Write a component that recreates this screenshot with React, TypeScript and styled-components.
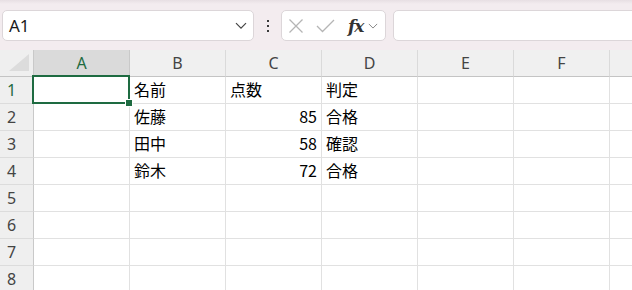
import React from 'react';
import styled, { createGlobalStyle } from 'styled-components';

const GlobalStyle = createGlobalStyle`
  body {
    margin: 0;
    background: #ffffff;
    font-family: "Noto Sans", "Noto Sans CJK JP", sans-serif;
  }
`;

// G is only partly in view, its letter falls outside the window
const columns = ['A', 'B', 'C', 'D', 'E', 'F', ''];

interface RowData {
  name?: string;
  score?: number | string;
  result?: string;
}

const rows: RowData[] = [
  { name: '名前', score: '点数', result: '判定' },
  { name: '佐藤', score: 85, result: '合格' },
  { name: '田中', score: 58, result: '確認' },
  { name: '鈴木', score: 72, result: '合格' },
  {},
  {},
  {},
  {},
];

const Page = styled.div`
  width: 632px;
  height: 290px;
  overflow: hidden;
  background: #ffffff;
`;

const Toolbar = styled.div`
  height: 50px;
  box-sizing: border-box;
  display: flex;
  align-items: flex-start;
  padding: 10px 0 0 2px;
  background: linear-gradient(180deg, #e7dfe3 0px, #f3ecef 4px, #f3ecef 100%);
  overflow: hidden;
`;

const NameBox = styled.div`
  flex: none;
  width: 252px;
  height: 31px;
  box-sizing: border-box;
  display: flex;
  align-items: center;
  justify-content: space-between;
  padding: 0 6px 0 6px;
  background: #ffffff;
  border: 1px solid #dcd6d9;
  border-radius: 5px;
  font-family: "Noto Sans", sans-serif;
  font-size: 17px;
  color: #1a1a1a;
`;

const Kebab = styled.div`
  flex: none;
  width: 27px;
  height: 31px;
  display: flex;
  flex-direction: column;
  align-items: center;
  justify-content: center;
  gap: 3px;
`;

const Dot = styled.span`
  width: 2px;
  height: 2px;
  background: #3a3a3a;
`;

const FxGroup = styled.div`
  flex: none;
  width: 105px;
  height: 31px;
  box-sizing: border-box;
  display: flex;
  align-items: center;
  padding-left: 6px;
  background: #ffffff;
  border: 1px solid #dcd6d9;
  border-radius: 5px;
`;

const FxLabel = styled.span`
  margin-left: 13px;
  font-family: "DejaVu Serif", "Liberation Serif", serif;
  font-style: italic;
  font-weight: bold;
  font-size: 17px;
  color: #333333;
  letter-spacing: -1px;
`;

const FormulaBar = styled.div`
  flex: none;
  width: 300px;
  height: 31px;
  margin-left: 7px;
  box-sizing: border-box;
  background: #ffffff;
  border: 1px solid #dcd6d9;
  border-radius: 5px;
`;

const Sheet = styled.div`
  display: grid;
  grid-template-columns: 34px repeat(7, 96px);
  grid-auto-rows: 27px;
`;

const Corner = styled.div`
  box-sizing: border-box;
  background: #efefef;
  border-right: 1px solid #c9c9c9;
  border-bottom: 1px solid #c4c4c4;
  display: flex;
  align-items: flex-end;
  justify-content: flex-end;
  padding: 0 4px 5px 0;
`;

const ColHeader = styled.div<{ $active?: boolean }>`
  box-sizing: border-box;
  display: flex;
  align-items: center;
  justify-content: center;
  background: ${p => (p.$active ? '#dadada' : '#f0f0f0')};
  border-right: 1px solid ${p => (p.$active ? '#c9c9c9' : '#dadada')};
  border-bottom: 1px solid #c4c4c4;
  color: ${p => (p.$active ? '#1e6b41' : '#444444')};
  font-size: 16px;
  padding-bottom: 1px;
`;

const RowHeader = styled.div<{ $active?: boolean }>`
  box-sizing: border-box;
  display: flex;
  align-items: center;
  padding-left: 7px;
  background: #efefef;
  border-right: 1px solid #c9c9c9;
  border-bottom: 1px solid #dcdcdc;
  color: ${p => (p.$active ? '#1e6b41' : '#444444')};
  font-size: 16px;
  padding-bottom: 1px;
`;

const Cell = styled.div<{ $align?: 'left' | 'right' }>`
  position: relative;
  box-sizing: border-box;
  display: flex;
  align-items: center;
  justify-content: ${p => (p.$align === 'right' ? 'flex-end' : 'flex-start')};
  padding: 0 4px 2px 4px;
  border-right: 1px solid #e1e1e1;
  border-bottom: 1px solid #e1e1e1;
  font-family: "Noto Sans CJK JP", "Noto Sans", sans-serif;
  font-size: 16px;
  color: #000000;
  white-space: nowrap;
`;

const Selection = styled.div`
  position: absolute;
  left: -2px;
  top: -2px;
  right: -1px;
  bottom: -1px;
  border: 2px solid #1e6b41;
  pointer-events: none;
  z-index: 1;
`;

const FillHandle = styled.div`
  position: absolute;
  right: -5px;
  bottom: -5px;
  width: 6px;
  height: 6px;
  background: #1e6b41;
  border: 1px solid #ffffff;
`;

const Chevron = ({ size = 12, color = '#333' }: { size?: number; color?: string }) => (
  <svg width={size} height={size * 0.6} viewBox="0 0 12 7" fill="none">
    <path d="M1 1l5 5 5-5" stroke={color} strokeWidth="1.2" />
  </svg>
);

const CrossIcon = () => (
  <svg width="16" height="16" viewBox="0 0 16 16" fill="none">
    <path d="M1.5 1.5l13 13M14.5 1.5l-13 13" stroke="#b5b5b5" strokeWidth="1.3" />
  </svg>
);

const CheckIcon = () => (
  <svg width="19" height="14" viewBox="0 0 19 14" fill="none" style={{ marginLeft: 12 }}>
    <path d="M1 7l5.5 5.5L18 1" stroke="#b5b5b5" strokeWidth="1.3" />
  </svg>
);

const CornerTriangle = () => (
  <svg width="20" height="17" viewBox="0 0 20 17">
    <path d="M20 0V17H0Z" fill="#dcdcdc" />
  </svg>
);

const App = () => {
  return (
    <Page>
      <GlobalStyle />
      <Toolbar>
        <NameBox>
          <span>A1</span>
          <Chevron size={12} color="#444" />
        </NameBox>
        <Kebab>
          <Dot />
          <Dot />
          <Dot />
        </Kebab>
        <FxGroup>
          <CrossIcon />
          <CheckIcon />
          <FxLabel>fx</FxLabel>
          <span style={{ marginLeft: 5, display: 'flex' }}>
            <Chevron size={10} color="#888" />
          </span>
        </FxGroup>
        <FormulaBar />
      </Toolbar>
      <Sheet>
        <Corner>
          <CornerTriangle />
        </Corner>
        {columns.map((c, i) => (
          <ColHeader key={i} $active={c === 'A'}>{c}</ColHeader>
        ))}
        {rows.map((r, i) => (
          <React.Fragment key={i}>
            <RowHeader $active={i === 0}>{i + 1}</RowHeader>
            <Cell>
              {i === 0 && (
                <Selection>
                  <FillHandle />
                </Selection>
              )}
            </Cell>
            <Cell>{r.name}</Cell>
            <Cell $align={typeof r.score === 'number' ? 'right' : 'left'}>{r.score}</Cell>
            <Cell>{r.result}</Cell>
            <Cell />
            <Cell />
            <Cell />
          </React.Fragment>
        ))}
      </Sheet>
    </Page>
  );
};

export default App;
